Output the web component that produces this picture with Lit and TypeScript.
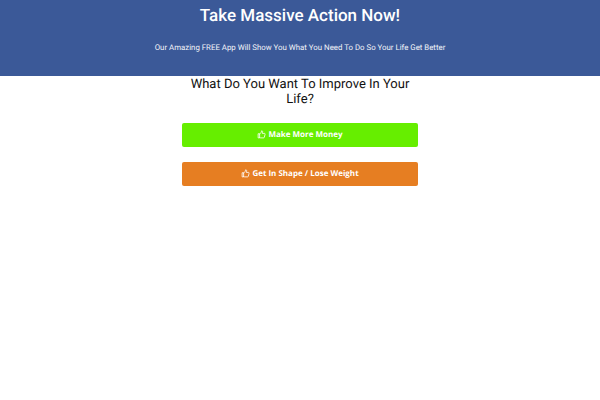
import { LitElement, html, css, svg } from "lit";
import { customElement } from "lit/decorators.js";

const thumb = svg`<svg class="ic" viewBox="0 0 24 24" fill="none" stroke="currentColor" stroke-width="2.2" stroke-linejoin="round" stroke-linecap="round"><path d="M7 11v10H3V11z"/><path d="M7 11c3-2 5-5 5-8 0-1.500 3-1.500 3 1.500 0 1.500-.5 3-1 4.500h6c1.500 0 2 1.500 1.500 2.500l-2 8c-.3 1-1 1.500-2 1.500H10c-1.500 0-2-.5-3-1"/></svg>`;

@customElement("app-root")
export class AppRoot extends LitElement {
  static styles = css`
    :host { display: block; font-family: Roboto, sans-serif; background: #fff; text-rendering: geometricPrecision; }
    .hero {
      background: #3b5998; color: #fff; height: 76px; text-align: center;
      padding-top: 5px; box-sizing: border-box;
    }
    h1 { margin: 0; font-size: 17px; line-height: 22px; font-weight: 500; }
    .hero p { margin: 14px 0 0; font-size: 7.85px; line-height: 14px; color: #f2f4f8; }
    .col { width: 236px; margin: 0 auto; display: flex; flex-direction: column; }
    h2 {
      margin: 0; padding-top: 1px; font-size: 13px; line-height: 15px; font-weight: 400;
      text-align: center; color: #111;
    }
    .btn {
      display: flex; align-items: center; justify-content: center; gap: 2px; height: 24px;
      box-sizing: border-box; padding-bottom: 1px;
      border-radius: 2px; color: #fff; font-family: "Open Sans", sans-serif;
      font-size: 8px; font-weight: 700;
    }
    .green { background: #66ee00; margin-top: 16px; }
    .orange { background: #e67e22; margin-top: 15px; }
    .ic { width: 9px; height: 9px; }
  `;

  render() {
    return html`
      <div class="hero">
        <h1>Take Massive Action Now!</h1>
        <p>Our Amazing FREE App Will Show You What You Need To Do So Your Life Get Better</p>
      </div>
      <div class="col">
        <h2>What Do You Want To Improve In Your<br />Life?</h2>
        <div class="btn green">${thumb}<span>Make More Money</span></div>
        <div class="btn orange">${thumb}<span>Get In Shape / Lose Weight</span></div>
      </div>
    `;
  }
}
